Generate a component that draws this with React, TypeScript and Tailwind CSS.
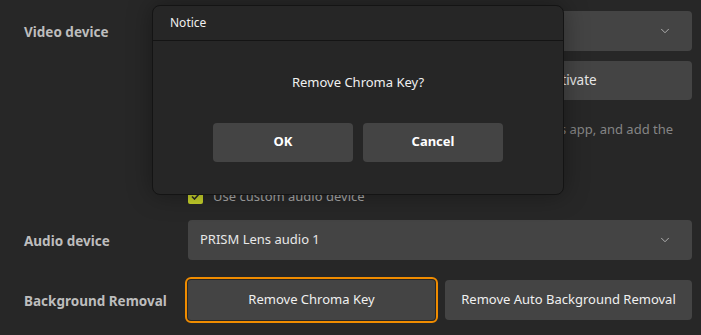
import { ChevronDown } from "lucide-react";

const font = { fontFamily: '"Noto Sans", "Open Sans", sans-serif' };

const Row = ({ label, className, children }: { label?: string; className?: string; children: React.ReactNode }) => (
  <div className={`flex ${className ?? ""}`}>
    <div className="flex w-[188px] shrink-0 items-center pl-6 pt-[2px] text-[13.5px] font-bold text-[#bdbdbd]">{label}</div>
    <div className="w-[504px]">{children}</div>
  </div>
);

const Select = ({ value }: { value: string }) => (
  <div className="flex h-10 items-center justify-between rounded bg-[#444444] pl-3 pr-5 text-[13px] text-[#e8e8e8]">
    <span>{value}</span>
    <ChevronDown size={14} strokeWidth={1.5} className="text-[#bdbdbd]" />
  </div>
);

export default function App() {
  return (
    <div className="relative h-[335px] w-[701px] overflow-hidden bg-[#272727]" style={font}>
      <div className="flex flex-col pt-[11px]">
        <Row label="Video device">
          <Select value="PRISM Lens" />
        </Row>

        <Row className="mt-[10px]">
          <div className="flex gap-[10px]">
            <button className="h-[39px] flex-1 rounded bg-[#444444] text-[13.5px] text-[#e8e8e8]">Deactivate</button>
            <button className="h-[39px] flex-1 rounded bg-[#444444] pl-[12px] text-[13.5px] text-[#e8e8e8]">Activate</button>
          </div>
        </Row>

        <Row className="mt-[19px]">
          <p className="whitespace-nowrap text-[13px] leading-[20px] text-[#858585]">
            To use PRISM Lens as video device, please run the PRISM Lens app, and add the
            <br />
            virtual camera as a source.
          </p>
        </Row>

        <Row className="mt-[30px]">
          <label className="flex h-[15px] items-center gap-[10px] text-[13px] text-[#a8a8a8]">
            <span className="flex h-[15px] w-[15px] items-center justify-center rounded-[2px] bg-[#c5d02a]">
              <svg width="9" height="7" viewBox="0 0 9 7">
                <path d="M1 3.5 L3.5 6 L8 1" fill="none" stroke="#272727" strokeWidth="1.6" />
              </svg>
            </span>
            Use custom audio device
          </label>
        </Row>

        <Row label="Audio device" className="mt-[16px]">
          <Select value="PRISM Lens audio 1" />
        </Row>

        <Row label="Background Removal" className="mt-[20px]">
          <div className="flex gap-[10px]">
            <button className="h-10 flex-1 rounded-[3px] bg-[#444444] text-[13px] text-[#f0f0f0] outline-2 outline-offset-1 outline-[#f08c00]">
              Remove Chroma Key
            </button>
            <button className="h-10 flex-1 rounded bg-[#444444] text-[13px] text-[#f0f0f0]">
              Remove Auto Background Removal
            </button>
          </div>
        </Row>
      </div>

      <div className="absolute left-[152px] top-[5px] flex h-[190px] w-[412px] flex-col rounded-lg border border-[#141414] bg-[#262626] shadow-[0_0_24px_rgba(0,0,0,0.35)]">
        <div className="flex h-[35px] items-center border-b border-[#141414] pl-[17px] text-[12px] text-[#f0f0f0]">
          Notice
        </div>
        <div className="flex flex-1 flex-col items-center">
          <p className="mt-[32px] text-[13px] text-[#f0f0f0]">Remove Chroma Key?</p>
          <div className="mt-[30px] flex gap-[10px]">
            <button className="h-[39px] w-[140px] rounded bg-[#444444] text-[13px] font-bold text-white">OK</button>
            <button className="h-[39px] w-[140px] rounded bg-[#444444] text-[13px] font-bold text-white">Cancel</button>
          </div>
        </div>
      </div>
    </div>
  );
}
